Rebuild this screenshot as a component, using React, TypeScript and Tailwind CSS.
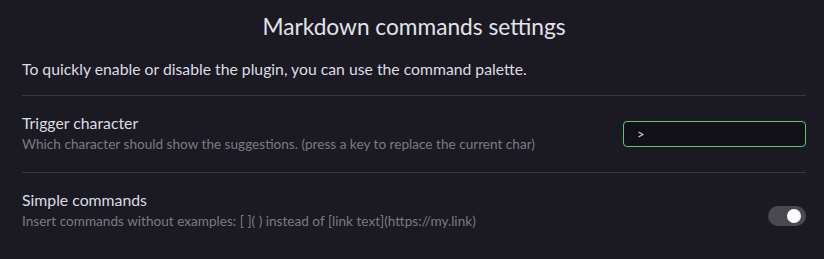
import { useState } from "react";

const Setting = ({
  name,
  desc,
  children,
}: {
  name: string;
  desc: string;
  children: React.ReactNode;
}) => (
  <div className="flex items-center justify-between border-t border-[#38363e] pt-4 pb-[18px]">
    <div className="flex flex-col">
      <div className="text-[15.8px] leading-[22px] text-[#dcdce2]">{name}</div>
      <div className="text-[13.6px] leading-[20px] text-[#7b7982]">{desc}</div>
    </div>
    {children}
  </div>
);

export default function App() {
  const [char, setChar] = useState(">");
  const [simple, setSimple] = useState(true);

  return (
    <div className="h-[259px] w-full bg-[#1b1a22] pl-[22px] pr-[18px] pt-[9px] font-['Lato',sans-serif]">
      <h2 className="text-center text-[22.7px] leading-[36px] text-[#e2e2e8]">
        Markdown commands settings
      </h2>

      <p className="mt-3 mb-[14px] text-[15.75px] leading-[24px] text-[#dcdce2]">
        To quickly enable or disable the plugin, you can use the command palette.
      </p>

      <Setting
        name="Trigger character"
        desc="Which character should show the suggestions. (press a key to replace the current char)"
      >
        <input
          value={char}
          onChange={(e) => setChar(e.target.value.slice(-1))}
          className="mt-[2px] h-[26px] w-[183px] rounded-[4px] border border-[#5fc66f] bg-[#121118] px-[13px] text-[13px] text-[#dcdce2] outline-none"
        />
      </Setting>

      <Setting
        name="Simple commands"
        desc="Insert commands without examples: [ ]( ) instead of [link text](https://my.link)"
      >
        <button
          onClick={() => setSimple(!simple)}
          className={`mt-3 flex h-[20px] w-[38px] items-center rounded-full px-[5px] ${
            simple ? "justify-end bg-[#4a4951]" : "justify-start bg-[#33323a]"
          }`}
        >
          <span className="h-[14px] w-[14px] rounded-full bg-white" />
        </button>
      </Setting>
    </div>
  );
}
